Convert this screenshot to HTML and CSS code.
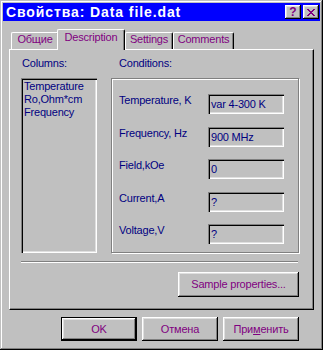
FILE: index.html
```html
<!DOCTYPE html>
<html lang="ru">
<head>
<meta charset="utf-8">
<title>Свойства: Data file.dat</title>
<link rel="stylesheet" href="styles.css">
</head>
<body>
<div class="window">
  <div class="titlebar">
    <div class="title">Свойства: Data file.dat</div>
    <div class="tbtn help">?</div>
    <div class="tbtn close">
      <svg width="8" height="7" viewBox="0 0 8 7"><path d="M0 0h2v1h-2zM6 0h2v1h-2zM1 1h2v1h-2zM5 1h2v1h-2zM2 2h4v1h-4zM3 3h2v1h-2zM2 4h4v1h-4zM1 5h2v1h-2zM5 5h2v1h-2zM0 6h2v1h-2zM6 6h2v1h-2z" fill="#800080"/></svg>
    </div>
  </div>

  <div class="tabs">
    <div class="tab t1">Общие</div>
    <div class="tab t2 active">Description</div>
    <div class="tab t3">Settings</div>
    <div class="tab t4">Comments</div>
  </div>

  <div class="panel">
    <div class="cols">
      <div class="col-left">
        <div class="cap cap-left">Columns:</div>
        <div class="list">
          <div>Temperature</div>
          <div>Ro,Ohm*cm</div>
          <div>Frequency</div>
        </div>
      </div>
      <div class="col-right">
        <div class="cap cap-right">Conditions:</div>
        <div class="group">
          <div class="row"><div class="lbl">Temperature, K</div><div class="field">var 4-300 K</div></div>
          <div class="row"><div class="lbl">Frequency, Hz</div><div class="field">900 MHz</div></div>
          <div class="row"><div class="lbl">Field,kOe</div><div class="field">0</div></div>
          <div class="row"><div class="lbl">Current,A</div><div class="field">?</div></div>
          <div class="row"><div class="lbl">Voltage,V</div><div class="field">?</div></div>
        </div>
      </div>
    </div>
    <div class="sep"></div>
    <div class="sample-row">
      <div class="btn sample">Sample properties...</div>
    </div>
  </div>

  <div class="footer">
    <div class="btn default">OK</div>
    <div class="btn">Отмена</div>
    <div class="btn">При<u>м</u>енить</div>
  </div>
</div>
</body>
</html>
```

FILE: styles.css
```css
* { box-sizing: border-box; }
html, body { margin: 0; padding: 0; }
body {
  width: 323px;
  height: 350px;
  overflow: hidden;
  background: #c0c0c0;
  font-family: "Liberation Sans", Arial, sans-serif;
  font-size: 11px;
  line-height: 13px;
  letter-spacing: -0.2px;
}
.window {
  width: 323px;
  height: 350px;
  background: #c0c0c0;
  padding: 3px;
  display: flex;
  flex-direction: column;
  box-shadow: inset -1px -1px #000, inset 1px 1px #c0c0c0, inset -2px -2px #808080, inset 2px 2px #fff;
}
.titlebar {
  height: 18px;
  flex: none;
  background: #0000ff;
  display: flex;
  align-items: center;
  padding: 0 1px 0 3px;
}
.title {
  flex: 1;
  color: #fff;
  font-weight: bold;
  font-size: 14px;
  line-height: 18px;
  letter-spacing: 0.9px;
  white-space: nowrap;
}
.tbtn {
  width: 16px;
  height: 14px;
  background: #c0c0c0;
  display: flex;
  align-items: center;
  justify-content: center;
  color: #800080;
  font-weight: bold;
  font-size: 12px;
  line-height: 12px;
  letter-spacing: 0;
  box-shadow: inset -1px -1px #000, inset 1px 1px #fff, inset -2px -2px #808080, inset 2px 2px #dfdfdf;
}
.tbtn + .tbtn { margin-left: 2px; }
.tbtn svg { display: block; }

.tabs {
  flex: none;
  margin: 8px 6px 0;
  height: 20px;
  display: flex;
  align-items: flex-end;
  padding-left: 2px;
}
.tab {
  height: 17px;
  background: #c0c0c0;
  color: #800080;
  text-align: center;
  border-top: 1px solid #fff;
  border-left: 1px solid #fff;
  border-right: 1px solid #000;
  border-radius: 2px 2px 0 0;
  box-shadow: inset -1px 0 #808080;
  line-height: 13px;
  padding-top: 0;
  white-space: nowrap;
}
.t1 { width: 48px; }
.t2 { width: 68px; }
.t3 { width: 48px; }
.t4 { width: 61px; }
.tab.active {
  height: 21px;
  margin-left: -2px;
  margin-bottom: -1px;
  padding-top: 1px;
  position: relative;
  z-index: 1;
}

.panel {
  flex: none;
  margin: 0 6px;
  height: 261px;
  border-top: 1px solid #fff;
  border-left: 1px solid #fff;
  border-right: 1px solid #000;
  border-bottom: 1px solid #000;
  box-shadow: inset -1px -1px #808080;
  padding: 7px 0 0 11px;
}
.cols { display: flex; gap: 14px; }
.col-left { width: 76px; }
.col-right { width: 189px; }
.cap { color: #000080; margin-bottom: 8px; }
.cap-left { padding-left: 1px; }
.cap-right { padding-left: 8px; }
.list {
  height: 175px;
  color: #000080;
  padding: 2px 3px;
  white-space: nowrap;
  box-shadow: inset 1px 1px #808080, inset 2px 2px #000, inset -1px -1px #fff, inset -2px -2px #dfdfdf;
}
.group {
  width: 188px;
  height: 175px;
  border: 1px solid #808080;
  box-shadow: 1px 1px 0 #fff, inset 1px 1px 0 #fff;
  padding: 15px 0 0 7px;
  display: flex;
  flex-direction: column;
  gap: 12.5px;
}
.row { display: flex; height: 20px; align-items: flex-start; }
.lbl { width: 89px; color: #000080; white-space: nowrap; padding-top: 0; }
.field {
  width: 76px;
  height: 20px;
  color: #000080;
  padding: 2px 3px 0;
  line-height: 16px;
  white-space: nowrap;
  box-shadow: inset 1px 1px #808080, inset 2px 2px #000, inset -1px -1px #fff, inset -2px -2px #dfdfdf;
}
.sep {
  margin-top: 8px;
  width: 277px;
  height: 2px;
  border-top: 1px solid #808080;
  border-bottom: 1px solid #fff;
}
.sample-row {
  width: 278px;
  margin-top: 9px;
  display: flex;
  justify-content: flex-end;
}
.btn {
  width: 76px;
  height: 24px;
  background: #c0c0c0;
  color: #800080;
  display: flex;
  align-items: center;
  justify-content: center;
  white-space: nowrap;
  box-shadow: inset -1px -1px #000, inset 1px 1px #fff, inset -2px -2px #808080, inset 2px 2px #dfdfdf;
}
.btn.sample { width: 121px; height: 25px; }
.btn.default {
  box-shadow: inset 0 0 0 1px #000, inset -2px -2px #000, inset 2px 2px #fff, inset -3px -3px #808080, inset 3px 3px #dfdfdf;
}
.btn u { text-decoration: underline; }
.footer {
  flex: none;
  margin-top: 7px;
  display: flex;
  justify-content: flex-end;
  gap: 5px;
  padding-right: 21px;
}
```
